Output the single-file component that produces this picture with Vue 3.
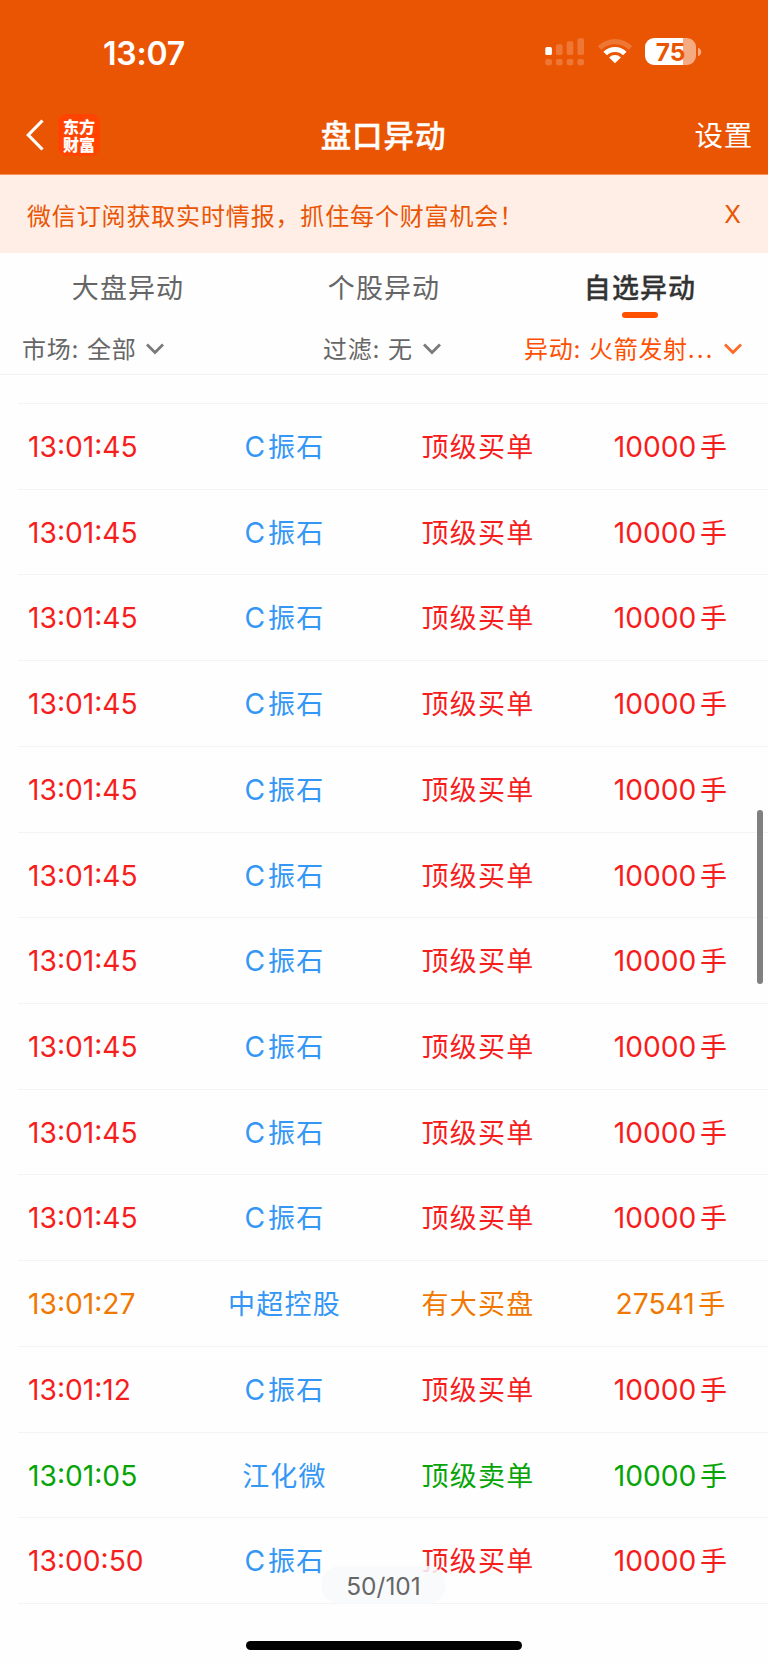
<script setup>
const tabs = [
  { label: '大盘异动', active: false },
  { label: '个股异动', active: false },
  { label: '自选异动', active: true },
]

const top = Array.from({ length: 10 }, () => ({
  time: '13:01:45', name: 'C振石', type: '顶级买单', amount: '10000', tone: 'red',
}))

const rows = [
  ...top,
  { time: '13:01:27', name: '中超控股', type: '有大买盘', amount: '27541', tone: 'orange' },
  { time: '13:01:12', name: 'C振石', type: '顶级买单', amount: '10000', tone: 'red' },
  { time: '13:01:05', name: '江化微', type: '顶级卖单', amount: '10000', tone: 'green' },
  { time: '13:00:50', name: 'C振石', type: '顶级买单', amount: '10000', tone: 'red' },
]
</script>

<template>
  <div class="phone">
    <header class="header">
      <div class="status">
        <span class="clock">13:07</span>
        <div class="indicators">
          <svg class="signal" width="40" height="28" viewBox="0 0 40 28">
            <rect x="0.3" y="9" width="6.6" height="8" rx="1.6" fill="#fff" />
            <g fill="#fff" fill-opacity="0.2">
              <rect x="11" y="6.3" width="6.6" height="10.7" rx="1.8" />
              <rect x="21.7" y="3.3" width="6.6" height="13.7" rx="1.8" />
              <rect x="32.4" y="0.3" width="6.6" height="16.7" rx="1.8" />
              <rect x="0.3" y="21" width="6.6" height="6.3" rx="1.8" />
              <rect x="11" y="21" width="6.6" height="6.3" rx="1.8" />
              <rect x="21.7" y="21" width="6.6" height="6.3" rx="1.8" />
              <rect x="32.4" y="21" width="6.6" height="6.3" rx="1.8" />
            </g>
          </svg>
          <svg class="wifi" width="36" height="26" viewBox="0 0 36 26">
            <path d="M0.8 8.2A24.3 24.3 0 0 1 35.2 8.2L31.6 11.8A19.2 19.2 0 0 0 4.4 11.8Z" fill="#fff" fill-opacity="0.2" />
            <path d="M6.4 13.8A16.4 16.4 0 0 1 29.6 13.8L26 17.3A11.3 11.3 0 0 0 10 17.3Z" fill="#fff" />
            <path d="M12.1 19.5A8.3 8.3 0 0 1 23.9 19.5L18 25.3Z" fill="#fff" />
          </svg>
          <div class="battery"><span>75</span></div>
          <svg class="cap" width="4" height="10" viewBox="0 0 4 10">
            <path d="M0 0.8C4.4 2.4 4.4 7.6 0 9.2Z" fill="#fff" fill-opacity="0.5" />
          </svg>
        </div>
      </div>
      <nav class="nav">
        <div class="nav-left">
          <svg width="19" height="32" viewBox="0 0 19 32">
            <path d="M17.5 1.5L3.3 16L17.5 30.5" fill="none" stroke="#fff" stroke-width="3.2" />
          </svg>
          <div class="logo">东方财富</div>
        </div>
        <h1 class="title">盘口异动</h1>
        <span class="settings">设置</span>
      </nav>
    </header>

    <div class="notice">
      <span>微信订阅获取实时情报，抓住每个财富机会！</span>
      <span class="close">X</span>
    </div>

    <div class="tabs">
      <div v-for="tab in tabs" :key="tab.label" class="tab" :class="{ active: tab.active }">
        <span>{{ tab.label }}</span>
        <i v-if="tab.active" class="underline"></i>
      </div>
    </div>

    <div class="filters">
      <div class="filter">
        <span class="key">市场:</span><span>全部</span>
        <svg width="18" height="12" viewBox="0 0 18 12"><path d="M1 1.5L9 9.5L17 1.5" /></svg>
      </div>
      <div class="filter">
        <span class="key">过滤:</span><span>无</span>
        <svg width="18" height="12" viewBox="0 0 18 12"><path d="M1 1.5L9 9.5L17 1.5" /></svg>
      </div>
      <div class="filter hot">
        <span class="key">异动:</span><span>火箭发射<span class="dots">...</span></span>
        <svg width="18" height="12" viewBox="0 0 18 12"><path d="M1 1.5L9 9.5L17 1.5" /></svg>
      </div>
    </div>

    <main class="list">
      <div v-for="(row, i) in rows" :key="i" class="row" :class="row.tone">
        <span class="time">{{ row.time }}</span>
        <span class="name"><template v-if="row.name[0] === 'C'"><b class="latin">C</b>{{ row.name.slice(1) }}</template><template v-else>{{ row.name }}</template></span>
        <span class="type">{{ row.type }}</span>
        <span class="amount"><b class="digits">{{ row.amount }}</b>手</span>
      </div>
    </main>

    <div class="scrollbar"></div>
    <div class="counter">50/101</div>
    <div class="home-bar"></div>
  </div>
</template>

<style>
body {
  background: #fefefe;
}
</style>

<style scoped>
.phone {
  position: relative;
  width: 768px;
  height: 1665px;
  overflow: hidden;
  background: #fefefe;
  color: #666;
  font-family: Inter, "Noto Sans CJK SC", sans-serif;
}

.header {
  height: 175px;
  background: #ea5504;
  color: #fff;
  border-bottom: 1px solid #f5925c;
  box-sizing: border-box;
}

.status {
  display: flex;
  justify-content: space-between;
  height: 96px;
  padding: 0 66px 0 103px;
}

.clock {
  padding-top: 33px;
  font-size: 32px;
  line-height: 41px;
  font-weight: 600;
  letter-spacing: -0.2px;
}

.indicators {
  display: flex;
  align-items: flex-start;
  padding-top: 38px;
}

.wifi {
  margin-left: 12px;
}

.battery {
  width: 51px;
  height: 27px;
  margin-left: 12px;
  border-radius: 9px;
  background: linear-gradient(to right, #fff 38px, #f5ab82 38px);
  color: #ea5504;
  font-size: 24.5px;
  line-height: 28px;
  font-weight: 700;
  text-align: center;
}

.cap {
  margin: 9px 0 0 2px;
}

.nav {
  display: grid;
  grid-template-columns: 1fr auto 1fr;
  align-items: center;
  height: 78px;
  padding: 0 15px 0 25px;
}

.nav-left {
  display: flex;
  align-items: center;
  gap: 14px;
}

.logo {
  width: 42px;
  height: 42px;
  box-sizing: border-box;
  padding: 3px 4px;
  border-radius: 9px;
  background: #ff4402;
  font-family: "Noto Sans CJK SC", sans-serif;
  font-size: 16px;
  line-height: 18px;
  font-weight: 900;
  text-align: center;
  word-break: break-all;
}

.title {
  margin: 2px 0 0 -11px;
  font-size: 30.5px;
  line-height: 40px;
  font-weight: 500;
  letter-spacing: 0.9px;
  -webkit-text-stroke: 0.4px #fff;
}

.settings {
  justify-self: end;
  margin-top: 2px;
  font-size: 28.5px;
  line-height: 40px;
  letter-spacing: 0.8px;
}

.notice {
  display: flex;
  justify-content: space-between;
  height: 78px;
  box-sizing: border-box;
  padding: 0 27px;
  background: #feeee6;
  color: #ea5504;
  font-size: 24px;
  line-height: 83px;
  letter-spacing: 0.85px;
}

.close {
  font-size: 24.5px;
  line-height: 79px;
  letter-spacing: 0;
}

.tabs {
  display: grid;
  grid-template-columns: repeat(3, 256px);
  height: 68px;
}

.tab {
  display: flex;
  flex-direction: column;
  align-items: center;
  padding-top: 16px;
  box-sizing: border-box;
  font-size: 27px;
  line-height: 40px;
  letter-spacing: 1.1px;
}

.tab.active {
  color: #333;
  font-weight: 500;
  -webkit-text-stroke: 0.3px #333;
}

.underline {
  width: 36px;
  height: 6px;
  margin-top: 3px;
  border-radius: 3px;
  background: #ff5000;
}

.filters {
  display: grid;
  grid-template-columns: 301px 201px auto;
  height: 54px;
  box-sizing: border-box;
  padding: 9px 0 0 22px;
  border-bottom: 1px solid #f2f2f2;
  font-size: 24px;
  line-height: 39px;
  letter-spacing: 0.7px;
}

.filter {
  display: flex;
}

.key {
  margin-right: 8px;
}

.filter svg {
  margin: 13px 0 0 10px;
  fill: none;
  stroke: #7a7a7a;
  stroke-width: 2.8;
}

.filter.hot {
  color: #ff5000;
}

.filter.hot svg {
  stroke: #ff6a25;
}

.dots {
  letter-spacing: 1.9px;
}

.list {
  margin: 28px 0 0 18px;
  border-top: 1px solid #f4f4f4;
}

.row {
  display: grid;
  grid-template-columns: 170px 193px 193px 193px;
  height: 85.73px;
  box-sizing: border-box;
  border-bottom: 1px solid #f4f4f4;
  font-size: 27px;
  line-height: 87px;
  letter-spacing: 1.25px;
  text-align: center;
  white-space: nowrap;
}

.time {
  padding-left: 10px;
  font-size: 28.2px;
  letter-spacing: 0;
  text-align: left;
}

.type {
  padding-left: 1px;
  line-height: 88px;
}

.latin,
.digits {
  font-size: 28.2px;
  font-weight: 400;
  letter-spacing: 0;
}

.latin {
  margin-right: 3px;
}

.amount {
  padding-left: 1px;
}

.digits {
  margin-right: 3.5px;
}

.red {
  color: #f61d1d;
}

.orange {
  color: #f07800;
}

.green {
  color: #06a406;
}

.name {
  color: #3497f5;
}

.scrollbar {
  position: absolute;
  right: 5px;
  top: 810px;
  width: 6px;
  height: 174px;
  border-radius: 3px;
  background: #808080;
}

.counter {
  position: absolute;
  left: 321px;
  top: 1566px;
  width: 125px;
  height: 38px;
  border-radius: 19px;
  background: rgba(247, 249, 252, 0.86);
  font-size: 24.5px;
  line-height: 41px;
  text-align: center;
}

.home-bar {
  position: absolute;
  left: 246px;
  top: 1641px;
  width: 276px;
  height: 9px;
  border-radius: 5px;
  background: #000;
}
</style>
